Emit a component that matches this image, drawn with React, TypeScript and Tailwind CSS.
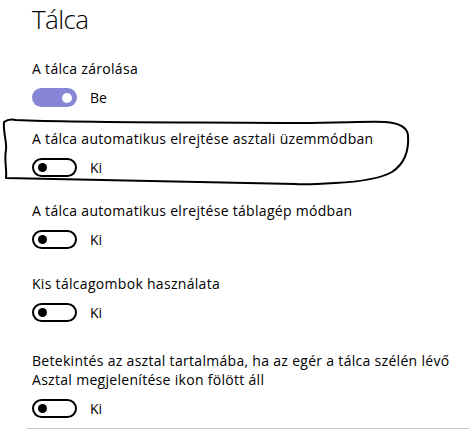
import React from "react";

type Setting = {
  label: string[];
  on: boolean;
  gap: string;
};

const settings: Setting[] = [
  { label: ["A tálca zárolása"], on: true, gap: "mt-[22px]" },
  { label: ["A tálca automatikus elrejtése asztali üzemmódban"], on: false, gap: "mt-[22px]" },
  { label: ["A tálca automatikus elrejtése táblagép módban"], on: false, gap: "mt-[24px]" },
  { label: ["Kis tálcagombok használata"], on: false, gap: "mt-[25px]" },
  {
    label: [
      "Betekintés az asztal tartalmába, ha az egér a tálca szélén lévő",
      "Asztal megjelenítése ikon fölött áll",
    ],
    on: false,
    gap: "mt-[29px]",
  },
];

const Toggle = ({ on }: { on: boolean }) =>
  on ? (
    <div className="flex h-[19px] w-[45px] items-center justify-end rounded-full bg-[#8785d6] pr-[5px]">
      <div className="h-[10px] w-[10px] rounded-full bg-white" />
    </div>
  ) : (
    <div className="flex h-[19px] w-[45px] items-center rounded-full border-2 border-black pl-[4px]">
      <div className="h-[9px] w-[9px] rounded-full bg-black" />
    </div>
  );

// the hand drawn marker ring around the second setting
const Scribble = () => (
  <svg
    className="pointer-events-none absolute left-0 top-0"
    width="469"
    height="429"
    viewBox="0 0 469 429"
    fill="none"
  >
    <path
      d="M4 122 C 8 119, 12 119, 16 120 C 80 123, 200 122, 300 123 C 340 123, 370 121, 385 122 C 400 123, 407 127, 408 135 C 409 148, 407 162, 392 172 C 378 180, 355 182, 335 183 C 320 184, 305 185, 295 184 C 220 182, 120 180, 6 178 C 7 168, 4 160, 6 150 C 7 142, 3 132, 4 122 Z"
      stroke="#000"
      strokeWidth="2"
      strokeLinejoin="round"
    />
  </svg>
);

export default function App() {
  return (
    <div className="relative h-[429px] w-[469px] overflow-hidden bg-white font-['Open_Sans',sans-serif] text-black">
      <div className="pl-[32px] pt-[1px]">
        <h1 className="text-[26px] font-light leading-[36px] tracking-[-0.6px]">Tálca</h1>
        {settings.map((s, i) => (
          <div key={i} className={s.gap}>
            {s.label.map((line) => (
              <div key={line} className="text-[14px] leading-[19px] tracking-[0.3px]">
                {line}
              </div>
            ))}
            <div className="mt-[10px] flex items-center gap-[13px]">
              <Toggle on={s.on} />
              <span className="text-[14px] leading-[19px]">{s.on ? "Be" : "Ki"}</span>
            </div>
          </div>
        ))}
      </div>
      <div className="absolute bottom-0 left-[27px] right-0 h-px bg-[#c6c6c6]" />
      <Scribble />
    </div>
  );
}
